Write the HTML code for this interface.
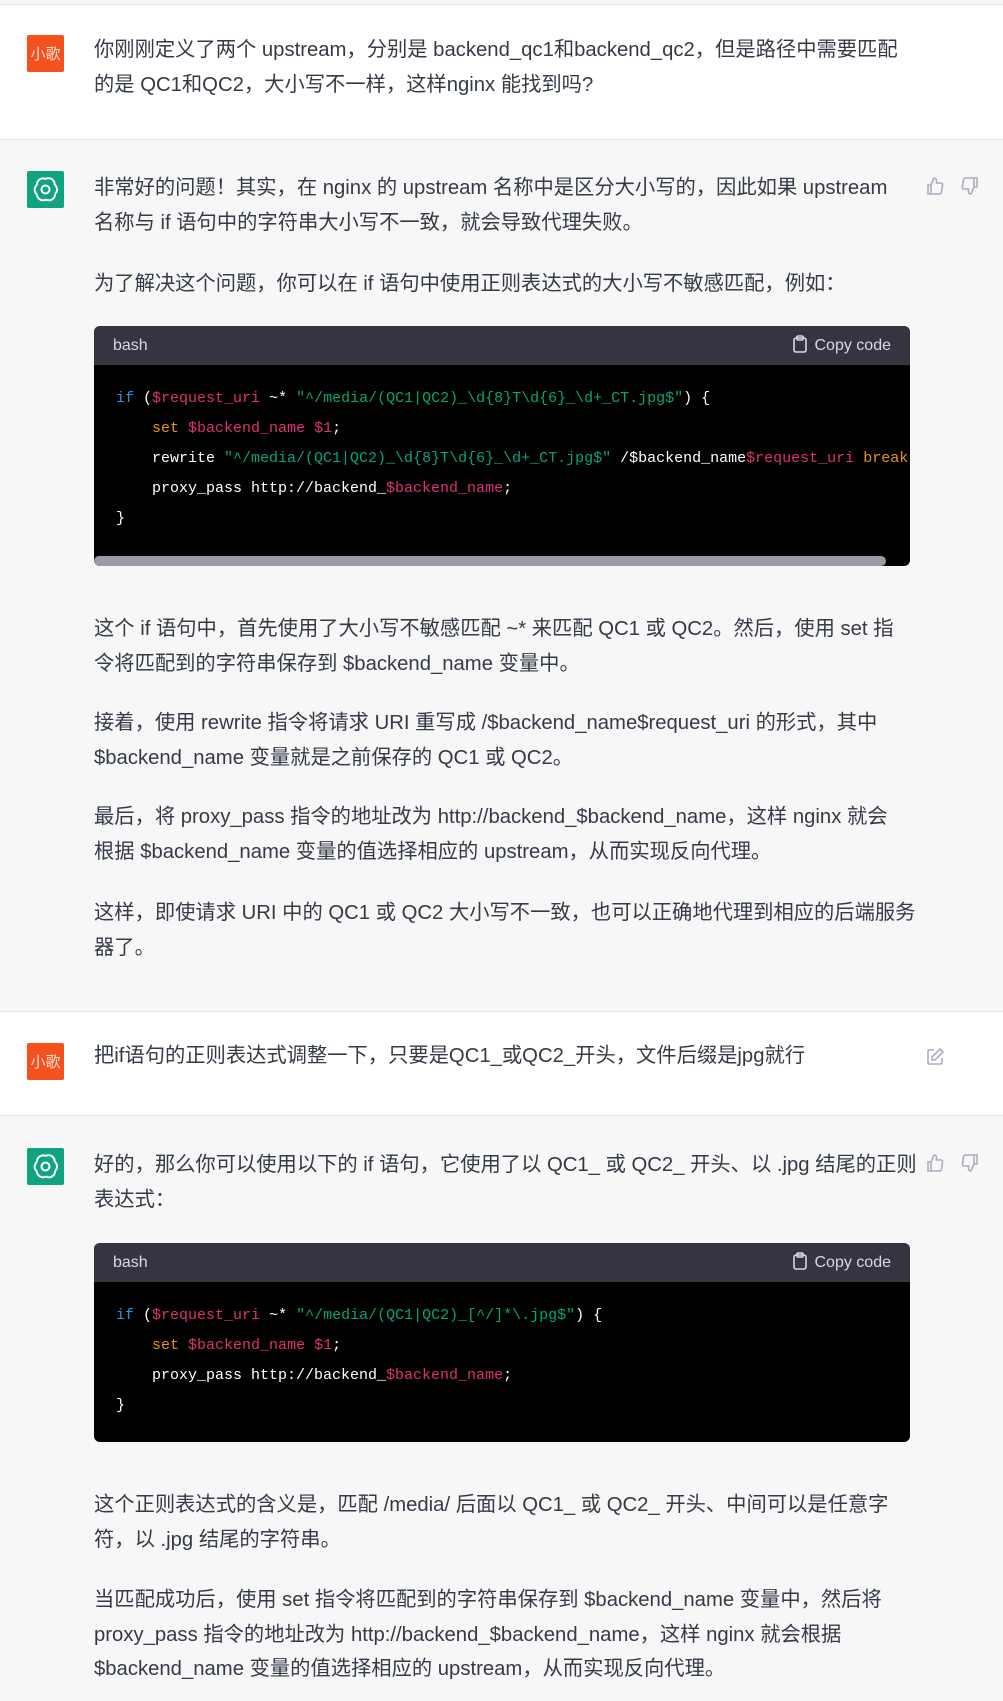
<!DOCTYPE html>
<html><head><meta charset="utf-8">
<style>
*{margin:0;padding:0;box-sizing:border-box}
body{width:1003px;height:1701px;position:relative;background:#f7f7f8;font-family:"Liberation Sans","Noto Sans CJK SC",sans-serif;color:#343a46;overflow:hidden}
.sec{position:absolute;left:0;width:1003px}
.white{background:#fff}
.av{position:absolute;left:27px;width:37px;height:37px;border-radius:2px}
.u{background:#f4511e;color:#fde0d6;font-size:15px;line-height:37px;text-align:center;font-family:"Noto Sans CJK SC",sans-serif}
.g{background:#10a37f}
.t{position:absolute;left:94px;font-size:20.3px;line-height:34.5px;white-space:nowrap}
.code{position:absolute;left:94px;width:816px;border-radius:6px;overflow:hidden;background:#000}
.hd{height:39px;background:#343541;color:#d9d9e3;font-size:16px;line-height:39px;padding:0 19px;position:relative}
.cp{position:absolute;right:19px;top:0}
.cp svg{vertical-align:-3px;margin-right:7px}
pre{font-family:"Liberation Mono",monospace;font-size:15px;line-height:30px;color:#fff;padding:19px 22px;white-space:pre}
.k{color:#2e95d3}.v{color:#df3079}.s{color:#00a67d}.o{color:#e9950c}
.ic{position:absolute}
</style></head><body>
<div class="sec" style="top:0;height:5px;background:#f7f7f8;border-bottom:1px solid #e5e5e5"></div>
<div class="sec white" style="top:5px;height:135px;border-bottom:1px solid #e5e5e5"></div>
<div class="av u" style="top:35px">小歌</div>
<div class="t" style="top:33px">你刚刚定义了两个 upstream，分别是 backend_qc1和backend_qc2，但是路径中需要匹配<br>的是 QC1和QC2，大小写不一样，这样nginx 能找到吗?</div>

<div class="av g" style="top:171px"><svg width="37" height="37" viewBox="0 0 37 37"><g fill="none" stroke="#fff" stroke-width="2"><circle cx="18.5" cy="18.5" r="4"/><path d="M18.5 8a6 6 0 0 1 9 6M28 14a6 6 0 0 1 0 9M28 23a6 6 0 0 1-9 5.5M19 28.5a6 6 0 0 1-9-5M10 23.5a6 6 0 0 1 0-9.5M10 14a6 6 0 0 1 8.5-6"/></g></svg></div>
<div class="t" style="top:171px">非常好的问题！其实，在 nginx 的 upstream 名称中是区分大小写的，因此如果 upstream<br>名称与 if 语句中的字符串大小写不一致，就会导致代理失败。</div>
<div class="t" style="top:267px">为了解决这个问题，你可以在 if 语句中使用正则表达式的大小写不敏感匹配，例如：</div>
<svg class="ic" style="left:925px;top:176px" width="20" height="20" viewBox="0 0 20 20" fill="none" stroke="#acacbe" stroke-width="1.6"><path d="M3 9h3v9H3zM6 9l3-7c1.5 0 2.5 1 2.5 2.5V7h4.5c1 0 1.8.9 1.6 1.9l-1.2 7.5c-.2.9-.9 1.6-1.8 1.6H6"/></svg>
<svg class="ic" style="left:960px;top:176px" width="20" height="20" viewBox="0 0 20 20" fill="none" stroke="#acacbe" stroke-width="1.6"><path d="M17 11h-3V2h3zM14 11l-3 7c-1.5 0-2.5-1-2.5-2.5V13H4c-1 0-1.8-.9-1.6-1.9L3.600 3.6C3.800 2.700 4.500 2 5.400 2H14"/></svg>

<div class="code" style="top:326px;height:240px">
<div class="hd">bash<span class="cp"><svg width="16" height="18" viewBox="0 0 16 18" fill="none" stroke="#d9d9e3" stroke-width="1.6"><rect x="2" y="3" width="12" height="14" rx="2"/><rect x="5" y="1" width="6" height="4" rx="1"/></svg>Copy code</span></div>
<pre><span class="k">if</span> (<span class="v">$request_uri</span> ~* <span class="s">"^/media/(QC1|QC2)_\d{8}T\d{6}_\d+_CT.jpg$"</span>) {
    <span class="o">set</span> <span class="v">$backend_name</span> <span class="v">$1</span>;
    rewrite <span class="s">"^/media/(QC1|QC2)_\d{8}T\d{6}_\d+_CT.jpg$"</span> /$backend_name<span class="v">$request_uri</span> <span class="o">break</span>;
    proxy_pass http://backend_<span class="v">$backend_name</span>;
}</pre>
<div style="position:absolute;left:0;bottom:0;width:792px;height:10px;background:#9b9ba5;border-radius:5px"></div>
</div>

<div class="t" style="top:612px">这个 if 语句中，首先使用了大小写不敏感匹配 ~* 来匹配 QC1 或 QC2。然后，使用 set 指<br>令将匹配到的字符串保存到 $backend_name 变量中。</div>
<div class="t" style="top:706px">接着，使用 rewrite 指令将请求 URI 重写成 /$backend_name$request_uri 的形式，其中<br>$backend_name 变量就是之前保存的 QC1 或 QC2。</div>
<div class="t" style="top:800px">最后，将 proxy_pass 指令的地址改为 http://backend_$backend_name，这样 nginx 就会<br>根据 $backend_name 变量的值选择相应的 upstream，从而实现反向代理。</div>
<div class="t" style="top:896px">这样，即使请求 URI 中的 QC1 或 QC2 大小写不一致，也可以正确地代理到相应的后端服务<br>器了。</div>

<div class="sec white" style="top:1011px;height:105px;border-top:1px solid #e5e5e5;border-bottom:1px solid #e5e5e5"></div>
<div class="av u" style="top:1043px">小歌</div>
<div class="t" style="top:1039px">把if语句的正则表达式调整一下，只要是QC1_或QC2_开头，文件后缀是jpg就行</div>
<svg class="ic" style="left:925px;top:1047px" width="20" height="20" viewBox="0 0 20 20" fill="none" stroke="#acacbe" stroke-width="1.6"><path d="M9 3H4a1 1 0 0 0-1 1v12a1 1 0 0 0 1 1h12a1 1 0 0 0 1-1v-5M15 2l3 3-8 8H7v-3z"/></svg>

<div class="av g" style="top:1148px"><svg width="37" height="37" viewBox="0 0 37 37"><g fill="none" stroke="#fff" stroke-width="2"><circle cx="18.5" cy="18.5" r="4"/><path d="M18.5 8a6 6 0 0 1 9 6M28 14a6 6 0 0 1 0 9M28 23a6 6 0 0 1-9 5.5M19 28.5a6 6 0 0 1-9-5M10 23.5a6 6 0 0 1 0-9.5M10 14a6 6 0 0 1 8.5-6"/></g></svg></div>
<div class="t" style="top:1148px">好的，那么你可以使用以下的 if 语句，它使用了以 QC1_ 或 QC2_ 开头、以 .jpg 结尾的正则<br>表达式：</div>
<svg class="ic" style="left:925px;top:1153px" width="20" height="20" viewBox="0 0 20 20" fill="none" stroke="#acacbe" stroke-width="1.6"><path d="M3 9h3v9H3zM6 9l3-7c1.5 0 2.5 1 2.5 2.5V7h4.5c1 0 1.8.9 1.6 1.9l-1.2 7.5c-.2.9-.9 1.6-1.8 1.6H6"/></svg>
<svg class="ic" style="left:960px;top:1153px" width="20" height="20" viewBox="0 0 20 20" fill="none" stroke="#acacbe" stroke-width="1.6"><path d="M17 11h-3V2h3zM14 11l-3 7c-1.5 0-2.5-1-2.5-2.5V13H4c-1 0-1.8-.9-1.6-1.9L3.600 3.6C3.800 2.700 4.500 2 5.400 2H14"/></svg>

<div class="code" style="top:1243px;height:199px">
<div class="hd">bash<span class="cp"><svg width="16" height="18" viewBox="0 0 16 18" fill="none" stroke="#d9d9e3" stroke-width="1.6"><rect x="2" y="3" width="12" height="14" rx="2"/><rect x="5" y="1" width="6" height="4" rx="1"/></svg>Copy code</span></div>
<pre><span class="k">if</span> (<span class="v">$request_uri</span> ~* <span class="s">"^/media/(QC1|QC2)_[^/]*\.jpg$"</span>) {
    <span class="o">set</span> <span class="v">$backend_name</span> <span class="v">$1</span>;
    proxy_pass http://backend_<span class="v">$backend_name</span>;
}</pre>
</div>

<div class="t" style="top:1488px">这个正则表达式的含义是，匹配 /media/ 后面以 QC1_ 或 QC2_ 开头、中间可以是任意字<br>符，以 .jpg 结尾的字符串。</div>
<div class="t" style="top:1583px">当匹配成功后，使用 set 指令将匹配到的字符串保存到 $backend_name 变量中，然后将<br>proxy_pass 指令的地址改为 http://backend_$backend_name，这样 nginx 就会根据<br>$backend_name 变量的值选择相应的 upstream，从而实现反向代理。</div>
</body></html>
